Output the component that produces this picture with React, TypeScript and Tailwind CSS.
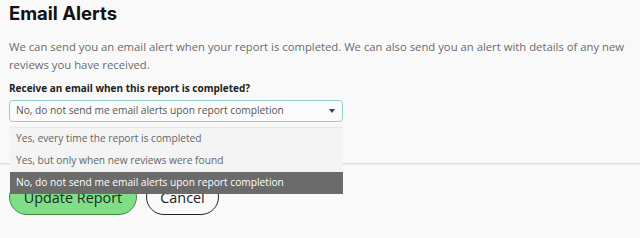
import React from "react";

const options = [
  "Yes, every time the report is completed",
  "Yes, but only when new reviews were found",
  "No, do not send me email alerts upon report completion",
];

export default function App() {
  const selected = 2;

  return (
    <div className="h-[238px] w-[640px] overflow-hidden bg-[#f9f9f9] font-['Open_Sans',sans-serif]">
      <div className="pl-[9px]">
        <h2 className="font-['Inter',sans-serif] text-[18.5px] font-bold leading-[26px] text-[#111]">
          Email Alerts
        </h2>

        <p className="mt-[12px] text-[11.3px] leading-[18px] text-[#6b6b6b]">
          We can send you an email alert when your report is completed. We can also send you an
          alert with details of any new reviews you have received.
        </p>

        <label className="mt-[6px] block text-[10px] font-bold leading-[16px] text-[#222]">
          Receive an email when this report is completed?
        </label>

        {/* select with its open list */}
        <div className="relative mt-[4px] w-[334px]">
          <div className="flex h-[22px] items-center justify-between rounded-[4px] border border-[#92cfcd] bg-[#fbfbfb] pl-[6px] pr-[7px]">
            <span className="text-[10.2px] text-[#555]">{options[selected]}</span>
            <svg width="6" height="4" viewBox="0 0 6 4">
              <path d="M0 0h6L3 4z" fill="#3b3b7a" />
            </svg>
          </div>

          <ul className="absolute left-[1px] top-[27px] z-10 w-[333px] border-t border-[#e6e6e6] bg-[#f4f4f4]">
            {options.map((o, i) => (
              <li
                key={o}
                className={`flex h-[22px] items-center pl-[6px] text-[10.2px] ${
                  i === selected ? "bg-[#6b6b6b] text-white" : "text-[#666]"
                }`}
              >
                {o}
              </li>
            ))}
          </ul>
        </div>
      </div>

      <div className="mt-[41px] h-[2px] border-t border-[#dadada] bg-[#efefef]" />

      <div className="mt-[14px] flex gap-[9px] pl-[9px]">
        <button className="h-[36px] w-[128px] rounded-full border border-[#3f8a3f] bg-[#80de86] pt-[2px] text-[14.4px] text-[#1d2b1d]">
          Update Report
        </button>
        <button className="h-[36px] w-[73px] rounded-full border-[1.5px] border-[#222] bg-[#fafafa] pt-[2px] text-[14.4px] text-[#222]">
          Cancel
        </button>
      </div>
    </div>
  );
}
